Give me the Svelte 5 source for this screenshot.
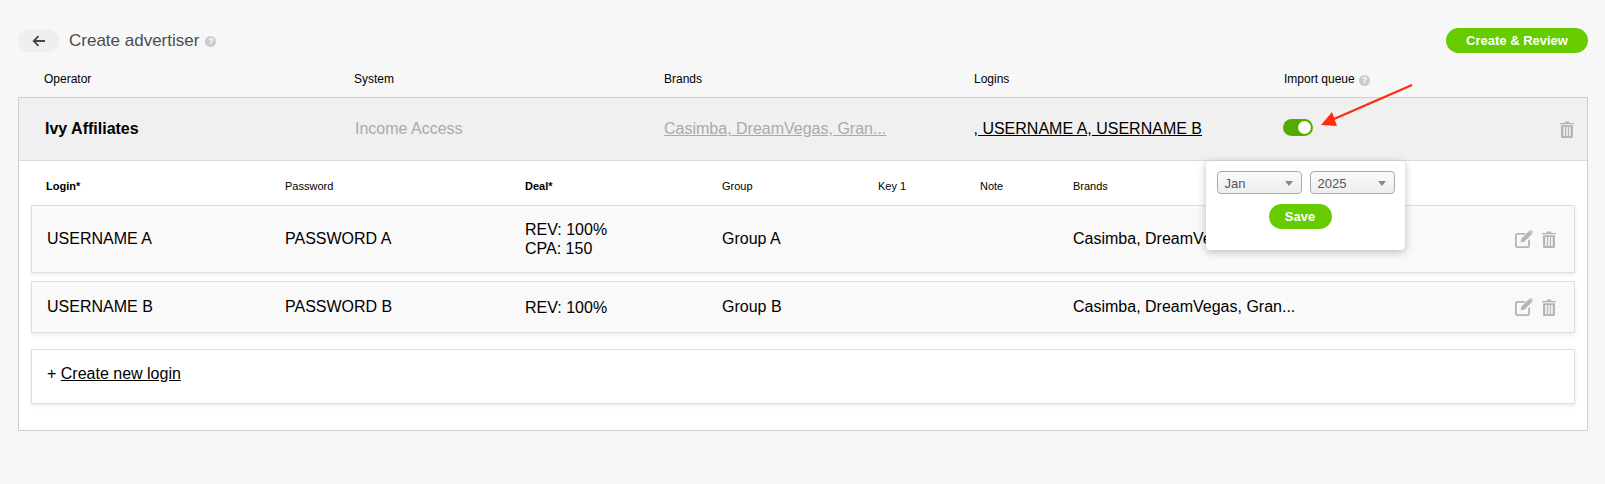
<script>
	const columns = [
		{ label: 'Login*', strong: true },
		{ label: 'Password' },
		{ label: 'Deal*', strong: true },
		{ label: 'Group' },
		{ label: 'Key 1' },
		{ label: 'Note' },
		{ label: 'Brands' }
	];

	const logins = [
		{ user: 'USERNAME A', pass: 'PASSWORD A', deal: ['REV: 100%', 'CPA: 150'], group: 'Group A', tall: true },
		{ user: 'USERNAME B', pass: 'PASSWORD B', deal: ['REV: 100%'], group: 'Group B', tall: false }
	];
</script>

{#snippet trash()}
	<svg class="trash" viewBox="0 0 14 17" aria-hidden="true">
		<path d="M5 0.5h4l0.6 1.4H14v1.4H0V1.900h4.400z" />
		<path fill-rule="evenodd" d="M1 4.200h12V15.500a1.500 1.500 0 0 1-1.500 1.500h-9A1.500 1.500 0 0 1 1 15.500zM3.300 6v9h1.600V6zM6.200 6v9h1.600V6zM9.100 6v9h1.600V6z" />
	</svg>
{/snippet}

{#snippet edit()}
	<svg class="edit" viewBox="0 0 18 18" aria-hidden="true">
		<path d="M2.500 3H11L9.300 4.800H2.800a1 1 0 0 0-1 1V15.200a1 1 0 0 0 1 1H12.200a1 1 0 0 0 1-1V10.500L15 8.700V15.500A2.500 2.500 0 0 1 12.500 18H2.500A2.500 2.500 0 0 1 0 15.500V5.500A2.500 2.500 0 0 1 2.500 3z" />
		<path d="M14.300 0.800l3 3L9.500 11.600 5.500 12.500l0.900-3.900zM15.200 0l0.800-0.100 2 2V2.700l-0.300 0.500-3-3z" />
	</svg>
{/snippet}

{#snippet help()}
	<span class="help">?</span>
{/snippet}

<div class="page">
	<header class="top">
		<div class="title-side">
			<button class="back" aria-label="Back">
				<svg viewBox="0 0 14 12" width="14" height="12" aria-hidden="true">
					<path d="M13 6H2M6.500 1.200 1.700 6l4.800 4.800" fill="none" stroke="#444" stroke-width="1.800" />
				</svg>
			</button>
			<h1>Create advertiser</h1>
			{@render help()}
		</div>
		<button class="pill create">Create &amp; Review</button>
	</header>

	<div class="operator-heads">
		<span>Operator</span>
		<span>System</span>
		<span>Brands</span>
		<span>Logins</span>
		<span class="queue-head">Import queue {@render help()}</span>
	</div>

	<section class="card">
		<div class="operator-row">
			<strong class="name">Ivy Affiliates</strong>
			<span class="muted">Income Access</span>
			<a class="muted link" href="#brands">Casimba, DreamVegas, Gran...</a>
			<a class="link" href="#logins">, USERNAME A, USERNAME B</a>
			<span class="toggle-cell"><span class="toggle"><span class="knob"></span></span></span>
			<span class="row-delete">{@render trash()}</span>
		</div>

		<div class="body">
			<div class="login-heads">
				{#each columns as col}
					<span class:strong={col.strong}>{col.label}</span>
				{/each}
			</div>

			{#each logins as login}
				<div class="login" class:tall={login.tall}>
					<span>{login.user}</span>
					<span>{login.pass}</span>
					<span class="deal">
						{#each login.deal as line}
							<span>{line}</span>
						{/each}
					</span>
					<span>{login.group}</span>
					<span></span>
					<span></span>
					<span>Casimba, DreamVegas, Gran...</span>
					<span class="actions">
						{@render edit()}
						{@render trash()}
					</span>
				</div>
			{/each}

			<div class="new-login">+ <a class="link" href="#new">Create new login</a></div>
		</div>

		<div class="popover">
			<div class="selects">
				<div class="select">Jan</div>
				<div class="select">2025</div>
			</div>
			<button class="pill save">Save</button>
		</div>
	</section>

	<svg class="arrow" viewBox="0 0 100 50" aria-hidden="true">
		<path d="M92 2 14 36" stroke="#ff2d0d" stroke-width="2.400" fill="none" />
		<path d="M1 42 12 29 17 43z" fill="#ff2d0d" />
	</svg>
</div>

<style>
	:global(body) {
		background: #f7f7f7;
	}

	.page {
		position: relative;
		height: 484px;
		box-sizing: border-box;
		padding: 28px 17px 0 18px;
		font-family: 'Liberation Sans', Arial, sans-serif;
		color: #000;
		overflow: hidden;
	}

	.top {
		display: flex;
		justify-content: space-between;
		align-items: center;
		height: 25px;
	}

	.title-side {
		display: flex;
		align-items: center;
	}

	.back {
		width: 41px;
		height: 23px;
		margin-right: 10px;
		padding: 0;
		border: 0;
		border-radius: 12px;
		background: #efefef;
		display: flex;
		align-items: center;
		justify-content: center;
	}

	h1 {
		margin: 0 6px 0 0;
		font-size: 17px;
		font-weight: 400;
		color: #4d4d4d;
	}

	.title-side .help {
		margin-top: 2px;
	}

	.help {
		display: inline-block;
		width: 11px;
		height: 11px;
		border-radius: 50%;
		background: #ccc;
		color: #fff;
		font-size: 9px;
		font-weight: 700;
		line-height: 11px;
		text-align: center;
	}

	.pill {
		border: 0;
		padding: 0;
		border-radius: 13px;
		background: #66cc00;
		color: #fff;
		font-family: inherit;
		font-size: 13px;
		font-weight: 700;
	}

	.create {
		width: 142px;
		height: 25px;
	}

	.operator-heads {
		display: grid;
		grid-template-columns: 310px 310px 310px 310px 1fr;
		height: 44px;
		padding-left: 26px;
		padding-top: 8px;
		align-items: center;
		box-sizing: border-box;
		font-size: 12px;
	}

	.queue-head .help {
		margin-left: 1px;
	}

	.card {
		position: relative;
		height: 334px;
		box-sizing: border-box;
		border: 1px solid #d0d0d0;
		background: #fff;
	}

	.operator-row {
		display: grid;
		grid-template-columns: 310px 309px 309.5px 309.5px 1fr auto;
		align-items: center;
		height: 63px;
		box-sizing: border-box;
		padding: 0 13px 0 26px;
		background: #f0f0f0;
		border-bottom: 1px solid #dcdcdc;
		font-size: 16px;
	}

	.name {
		font-weight: 700;
	}

	.muted {
		color: #aaa;
	}

	.link {
		color: inherit;
		text-decoration: underline;
	}

	.muted.link {
		color: #aaa;
	}

	.toggle-cell {
		display: flex;
		margin-top: -3px;
	}

	.toggle {
		display: flex;
		justify-content: flex-end;
		align-items: center;
		width: 30px;
		height: 17px;
		box-sizing: border-box;
		padding-right: 2px;
		border-radius: 9px;
		background: #55aa00;
	}

	.knob {
		width: 13px;
		height: 13px;
		border-radius: 50%;
		background: #fff;
	}

	.row-delete {
		display: flex;
		margin-top: 1px;
	}

	.trash {
		width: 14px;
		height: 17px;
		fill: #b5b5b5;
		flex: none;
	}

	.edit {
		width: 18px;
		height: 18px;
		fill: #b5b5b5;
		flex: none;
	}

	.body {
		padding: 0 12px 0 12px;
	}

	.login-heads,
	.login {
		display: grid;
		align-items: center;
	}

	.login-heads {
		grid-template-columns: 239px 240px 197px 156px 102px 93px 1fr;
		height: 44px;
		padding-left: 15px;
		padding-top: 6px;
		box-sizing: border-box;
		font-size: 11px;
	}

	.strong {
		font-weight: 700;
	}

	.login {
		grid-template-columns: 238px 240px 197px 156px 101px 94px 1fr auto;
		height: 52px;
		box-sizing: border-box;
		margin-bottom: 8px;
		padding: 0 18px 0 15px;
		background: #f9f9f9;
		border: 1px solid #dfdfdf;
		box-shadow: 0 2px 4px rgba(0, 0, 0, 0.08);
		font-size: 16px;
	}

	.login.tall {
		height: 68px;
	}

	.deal {
		display: flex;
		flex-direction: column;
		line-height: 19px;
	}

	.actions {
		display: flex;
		align-items: center;
		gap: 9px;
	}

	.new-login {
		margin-top: 16px;
		height: 55px;
		box-sizing: border-box;
		padding: 15px 15px;
		background: #fff;
		border: 1px solid #dfdfdf;
		box-shadow: 0 2px 4px rgba(0, 0, 0, 0.08);
		font-size: 16px;
	}

	.popover {
		position: absolute;
		left: 1187px;
		top: 63px;
		width: 199px;
		height: 89px;
		box-sizing: border-box;
		padding: 10px;
		background: #fff;
		border-radius: 4px;
		box-shadow: 0 2px 8px rgba(0, 0, 0, 0.25);
		display: flex;
		flex-direction: column;
		align-items: center;
	}

	.selects {
		display: flex;
		gap: 8px;
	}

	.select {
		position: relative;
		width: 85px;
		height: 23px;
		box-sizing: border-box;
		padding-left: 7px;
		border: 1px solid #aaa;
		border-radius: 4px;
		background: linear-gradient(#fafafa, #eee);
		font-size: 13px;
		line-height: 23px;
		color: #555;
	}

	.select::after {
		content: '';
		position: absolute;
		right: 8px;
		top: 9px;
		border-left: 4px solid transparent;
		border-right: 4px solid transparent;
		border-top: 5px solid #888;
	}

	.save {
		width: 63px;
		height: 25px;
		margin-top: 10px;
		margin-right: 11px;
	}

	.arrow {
		position: absolute;
		left: 1320px;
		top: 83px;
		width: 100px;
		height: 50px;
	}
</style>
